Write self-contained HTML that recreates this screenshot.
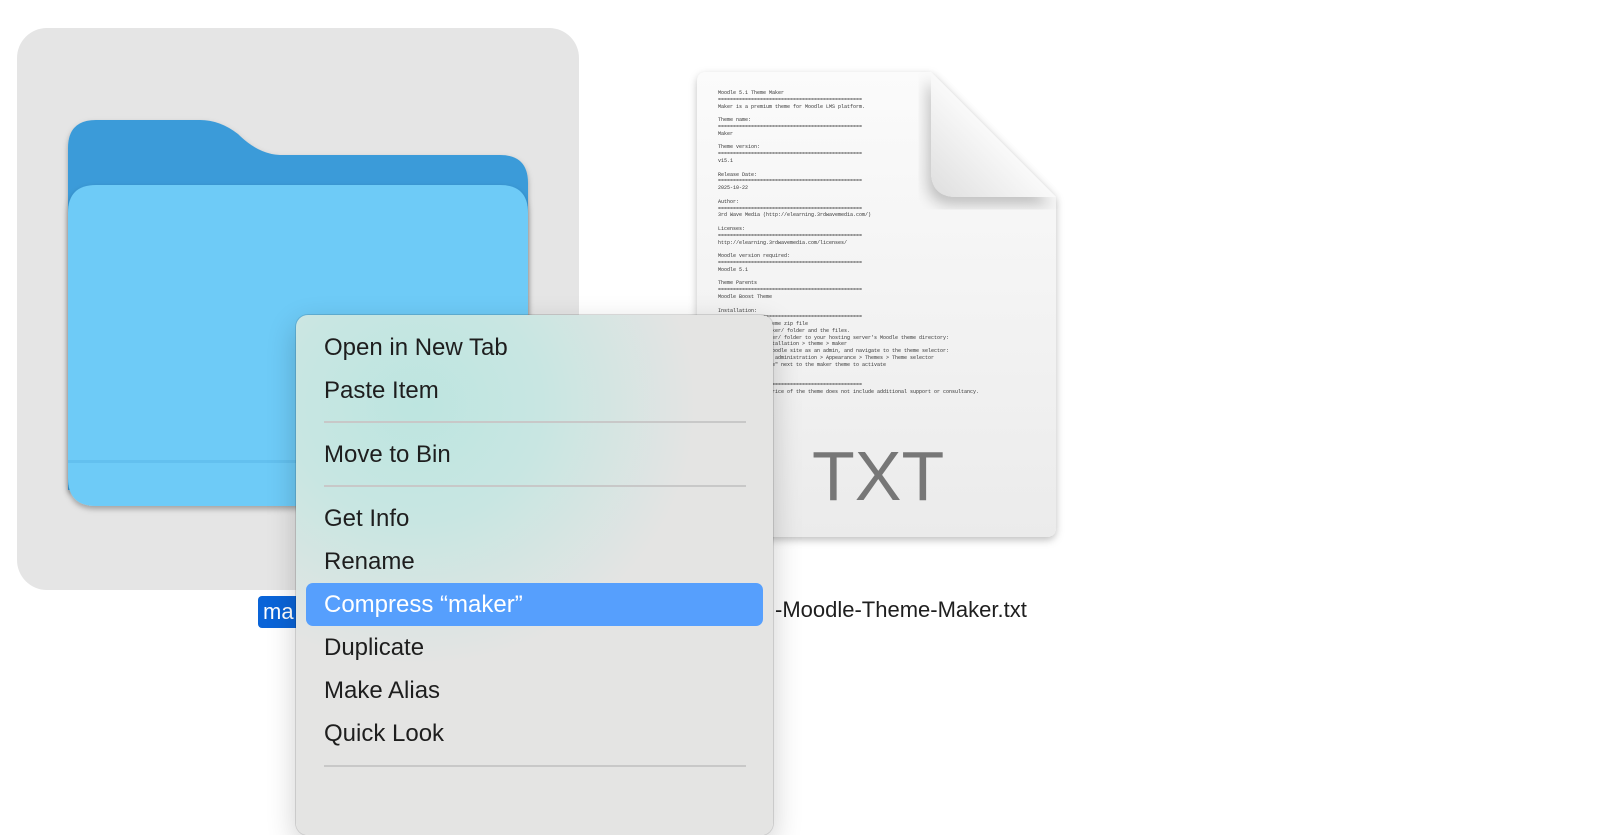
<!DOCTYPE html>
<html><head><style>
body{margin:0;width:1605px;height:808px;background:#fff;position:relative;overflow:hidden;font-family:"Liberation Sans",sans-serif}
.card{position:absolute;left:17px;top:28px;width:562px;height:562px;background:#e5e5e5;border-radius:30px}
.menu{position:absolute;left:296px;top:315px;width:477px;height:520px;border-radius:12px;background:radial-gradient(ellipse 280px 260px at 120px 90px,#bde5e0 0%,#c8e6e2 45%,#e4e4e3 100%);box-shadow:0 0 0 1px rgba(0,0,0,.12),0 10px 30px rgba(0,0,0,.2)}
.it{position:absolute;left:28px;font-size:24px;color:#1e1e1e;line-height:43px;height:43px}
.sep{position:absolute;left:28px;width:422px;height:2px;background:#c8c8c8}
.hl{position:absolute;left:10px;top:268px;width:457px;height:43px;background:#569ffd;border-radius:7px}
.lines{position:absolute;left:718px;top:90px;font-family:"Liberation Mono",monospace;font-size:5px;line-height:6.8px;color:#333;white-space:pre}
</style></head><body>
<div class="card"></div>
<svg style="position:absolute;left:60px;top:110px" width="480" height="410">
<defs><filter id="s"><feDropShadow dx="0" dy="3" stdDeviation="3" flood-opacity=".3"/></filter></defs>
<path d="M8 38 Q8 10 36 10 L140 10 Q160 10 178 24 Q198 44 220 45 L440 45 Q468 45 468 73 L468 380 L8 380Z" fill="#3a9bd9" filter="url(#s)"/>
<path d="M8 103 Q8 75 36 75 L440 75 Q468 75 468 103 L468 368 Q468 396 440 396 L36 396 Q8 396 8 368Z" fill="#6ecbf7" filter="url(#s)"/>
<rect x="8" y="350" width="460" height="3" fill="#5cb9ea" opacity=".6"/>
</svg>
<svg style="position:absolute;left:687px;top:62px" width="380" height="490">
<defs>
<filter id="d"><feDropShadow dx="0" dy="3" stdDeviation="4" flood-opacity=".25"/></filter>
<filter id="f"><feDropShadow dx="-4" dy="8" stdDeviation="7" flood-opacity=".22"/></filter>
<linearGradient id="g" x1="0" y1="0" x2="0" y2="1"><stop offset="0" stop-color="#fbfbfb"/><stop offset="1" stop-color="#ebebeb"/></linearGradient>
<linearGradient id="h" x1="1" y1="0" x2="0" y2="1"><stop offset=".4" stop-color="#fff"/><stop offset="1" stop-color="#dedede"/></linearGradient>
</defs>
<path d="M20 10 L244 10 L369 135 L369 465 Q369 475 359 475 L20 475 Q10 475 10 465 L10 20 Q10 10 20 10Z" fill="url(#g)" filter="url(#d)"/>
<path d="M244 10 L369 135 L270 135 Q244 135 244 109Z" fill="url(#h)" filter="url(#f)"/>
</svg>
<div class="lines">Moodle 5.1 Theme Maker
================================================
Maker is a premium theme for Moodle LMS platform.

Theme name:
================================================
Maker

Theme version:
================================================
v15.1

Release Date:
================================================
2025-10-22

Author:
================================================
3rd Wave Media (http://elearning.3rdwavemedia.com/)

Licenses:
================================================
http://elearning.3rdwavemedia.com/licenses/

Moodle version required:
================================================
Moodle 5.1

Theme Parents
================================================
Moodle Boost Theme

Installation:
================================================
1) Download the theme zip file
2) Extract the /maker/ folder and the files.
3) Upload the /maker/ folder to your hosting server's Moodle theme directory:
   Your Moodle installation > theme > maker
4) Log into your Moodle site as an admin, and navigate to the theme selector:
   Settings > Site administration > Appearance > Themes > Theme selector
5) Click "use theme" next to the maker theme to activate

Support:
================================================
Please note, the price of the theme does not include additional support or consultancy.</div>
<div style="position:absolute;left:812px;top:436px;font-size:70px;color:#777">TXT</div>
<div style="position:absolute;left:258px;top:596px;width:50px;height:32px;background:#0a64d8;border-radius:4px;color:#fff;font-size:22px;line-height:32px;padding-left:5px">ma</div>
<div style="position:absolute;left:775px;top:597px;font-size:22px;color:#1e1e1e">-Moodle-Theme-Maker.txt</div>
<div class="menu">
<div class="hl"></div>
<div class="it" style="top:11px">Open in New Tab</div>
<div class="it" style="top:54px">Paste Item</div>
<div class="sep" style="top:106px"></div>
<div class="it" style="top:118px">Move to Bin</div>
<div class="sep" style="top:170px"></div>
<div class="it" style="top:182px">Get Info</div>
<div class="it" style="top:225px">Rename</div>
<div class="it" style="top:268px;color:#fff">Compress “maker”</div>
<div class="it" style="top:311px">Duplicate</div>
<div class="it" style="top:354px">Make Alias</div>
<div class="it" style="top:397px">Quick Look</div>
<div class="sep" style="top:450px"></div>
</div>
</body></html>
